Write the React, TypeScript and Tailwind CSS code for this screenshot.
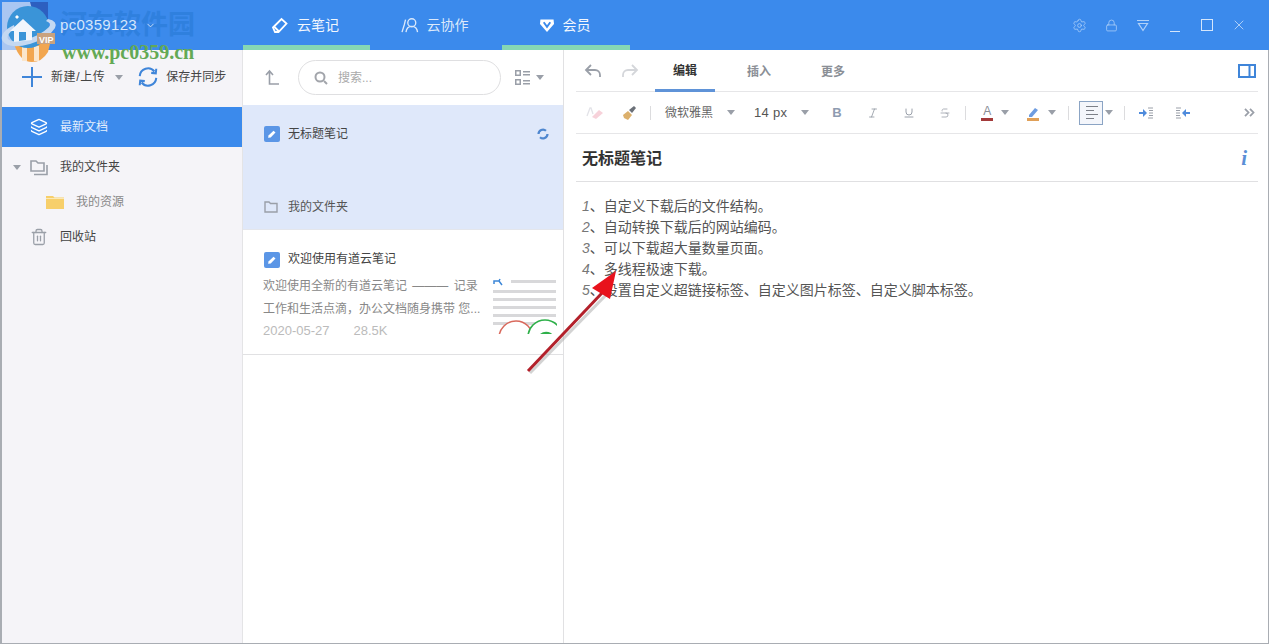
import { ChevronDown, Italic, Layers, Lock, Settings, Strikethrough, Trash2, Underline, X } from 'lucide-react';

const font = { fontFamily: '"Liberation Sans", "Noto Sans CJK SC", sans-serif' };

function Caret({ className = '' }: { className?: string }) {
  return <span className={`w-0 h-0 border-x-[4px] border-x-transparent border-t-[5px] border-t-[#9a9fa8] ${className}`} />;
}

function NoteIcon() {
  return (
    <svg width="16" height="16" viewBox="0 0 16 16" className="shrink-0">
      <rect width="16" height="16" rx="2" fill="#5b96e6" />
      <path d="M4.500 9.500 9.500 4.800l2 1.800-4.800 4.800-2.600.4z" fill="#fff" />
    </svg>
  );
}

function Logo() {
  return (
    <svg width="60" height="64" viewBox="0 0 60 64" className="absolute left-0 top-0">
      <rect x="2" y="2" width="46" height="48" fill="#a9c6f2" />
      <path d="M30 2h18v17L38 30z" fill="#2d5fc0" />
      <path d="M14 44h36l-2 8q-6 10-16 10-12 0-18-18z" fill="#f2a650" />
      <path d="M22 46h5v15h-5zM34 46h5v15h-5z" fill="#fbe6cc" />
      <circle cx="28" cy="27" r="21" fill="#3a94d8" />
      <path d="M2 40q-2-8 12-15l1 4q-9 5-7 10 4 4 16 1 16-4 25-13 3-4-3-6l2-2q10 2 7 9-6 10-25 16Q8 50 2 40z" fill="#c4d8f2" />
      <path d="M10 31 23 19l13 12h-4v9l-18 2V31z" fill="#f2f6fc" />
      <path d="M19 32h7v8l-7 1z" fill="#3a94d8" />
      <path d="m15 17 2-2 2 2-2 2z" fill="#fff" />
      <rect x="37" y="33" width="18" height="11" fill="#c9a27e" />
      <text x="39" y="43" fontSize="9" fontWeight="bold" fill="#fff">VIP</text>
    </svg>
  );
}

function NavTab({ label, icon, active, width }: { label: string; icon: React.ReactNode; active?: boolean; width: string }) {
  return (
    <div className={`${width} h-full flex items-center justify-center gap-[8px] pt-[5px] pr-[3px] text-[14px] border-b-[5px] ${active ? 'border-b-[#85d7b4] text-[#f2f7fe]' : 'border-b-transparent text-[#dbe9fb]'}`}>
      {icon}
      <span>{label}</span>
    </div>
  );
}

function Thumb() {
  return (
    <svg width="64" height="56" viewBox="0 0 64 56" className="shrink-0 overflow-hidden">
      <path d="M1 6V3h5l3 4M6 3l1-2" stroke="#3d87d8" strokeWidth="1.500" fill="none" />
      <rect x="18" y="2" width="45" height="3" fill="#d8d8da" />
      <rect x="0" y="12" width="63" height="3" fill="#d8d8da" />
      <rect x="0" y="20" width="63" height="3" fill="#d8d8da" />
      <rect x="0" y="28" width="63" height="3" fill="#d8d8da" />
      <rect x="0" y="36" width="63" height="3" fill="#d8d8da" />
      <rect x="0" y="44" width="63" height="3" fill="#d8d8da" />
      <circle cx="23" cy="60" r="17" fill="#fff" stroke="#d9695c" strokeWidth="1.500" />
      <circle cx="52" cy="59" r="17" fill="#fff" stroke="#2fb04a" strokeWidth="1.600" />
      <path d="M47 56q5-4 11-1l1 1z" fill="#2fb04a" />
    </svg>
  );
}

export default function App() {
  return (
    <div className="relative w-[1269px] h-[644px] flex flex-col overflow-hidden bg-white text-[#333]" style={font}>
      {/* title bar */}
      <div className="h-[50px] shrink-0 flex items-center bg-[#3b8aec]">
        <div className="relative z-10 w-[243px] h-full flex items-center pl-[60px] gap-[8px] text-[#d5e6fb]">
          <span className="text-[15px] tracking-[0.3px]">pc0359123</span>
          <ChevronDown size={11} strokeWidth={2} className="mt-[1px]" />
        </div>
        <NavTab
          label="云笔记"
          width="w-[127px]"
          active
          icon={
            <svg width="18" height="18" viewBox="0 0 18 18" fill="none" stroke="#fff" strokeWidth="1.800">
              <path d="M2 11.500 10.500 3l5 4.500-8 8.500H4z" />
              <path d="m3 10.500 5 5" />
            </svg>
          }
        />
        <NavTab
          label="云协作"
          width="w-[132px]"
          icon={
            <svg width="18" height="16" viewBox="0 0 20 18" fill="none" stroke="#dbe9fb" strokeWidth="1.500">
              <circle cx="12" cy="6.500" r="4.500" />
              <path d="M5.500 17c.5-4 3-6.500 6.500-6.500s6 2.500 6.500 6.500M5 3 3.500 9 1 17" />
            </svg>
          }
        />
        <NavTab
          label="会员"
          width="w-[128px]"
          active
          icon={
            <svg width="16" height="15" viewBox="0 0 16 16">
              <path d="M1 1.500h14l.5 5L8 15 .5 6.500z" fill="#fff" />
              <path d="m4.500 4.500 3.500 5 3.500-5" fill="none" stroke="#3b8aec" strokeWidth="2" />
            </svg>
          }
        />
        <div className="flex-1" />
        <div className="flex items-center text-[#b0d1f8]">
          <Settings size={15} strokeWidth={1.200} />
          <Lock size={13} strokeWidth={1.400} className="ml-[18px]" />
          <svg width="14" height="13" viewBox="0 0 14 13" fill="none" stroke="currentColor" strokeWidth="1.200" className="ml-[18px]">
            <path d="M1 1.500h12M2.500 4.500h9L7 11.500z" />
          </svg>
          <span className="ml-[20px] w-[10px] h-[1px] mt-[12px] bg-[#d5e6fb]" />
          <span className="ml-[21px] w-[12px] h-[12px] border border-[#d5e6fb]" />
          <X size={16} strokeWidth={1} className="ml-[18px] mr-[22px] text-[#e5f0fd]" />
        </div>
      </div>

      <div className="flex-1 flex min-h-0 border-x-2 border-b border-x-[#a9adb3] border-b-[#a9adb3] border-r-[1px]">
        {/* sidebar */}
        <div className="w-[240px] shrink-0 flex flex-col bg-[#f5f4f8] text-[12px]">
          <div className="h-[57px] flex items-center pl-[20px] pb-[3px] text-[#444]">
            <svg width="20" height="20" viewBox="0 0 20 20" stroke="#3f85d9" strokeWidth="2">
              <path d="M10 0v20M0 10h20" />
            </svg>
            <span className="ml-[9px] tracking-[0.6px]">新建/上传</span>
            <Caret className="ml-[10px] mt-[1px]" />
            <svg width="22" height="22" viewBox="0 0 24 24" fill="none" stroke="#3f85d9" strokeWidth="2.200" className="ml-[14px]">
              <path d="M3 11a9 9 0 0 1 16-5M21 13a9 9 0 0 1-16 5" />
              <path d="m15.500 7.500 5 .5.500-5M8.500 16.500l-5-.500-.500 5" fill="none" />
            </svg>
            <span className="ml-[7px]">保存并同步</span>
          </div>
          <div className="h-[40px] flex items-center pl-[28px] bg-[#3b8aec] text-[#e3eefc]">
            <Layers size={18} strokeWidth={1.700} className="text-white" />
            <span className="ml-[12px]">最新文档</span>
          </div>
          <div className="h-[38px] flex items-center pl-[11px] pt-[2px] text-[#444]">
            <Caret />
            <svg width="18" height="17" viewBox="0 0 18 17" fill="none" stroke="#9a9fa8" strokeWidth="1.600" className="ml-[9px]">
              <path d="M1 12V2h5l2 2h6v8zM17 6v9.500H4" />
            </svg>
            <span className="ml-[12px]">我的文件夹</span>
          </div>
          <div className="h-[32px] flex items-center pl-[44px] pt-[2px] text-[#888]">
            <svg width="18" height="14" viewBox="0 0 18 14">
              <path d="M0 1h7l1.500 1.500H18V14H0z" fill="#f7cf6b" />
              <path d="M0 3h18v1H0z" fill="#fbe9b8" />
            </svg>
            <span className="ml-[12px]">我的资源</span>
          </div>
          <div className="h-[38px] flex items-center pl-[28px] pt-[2px] text-[#444]">
            <Trash2 size={18} strokeWidth={1.700} className="text-[#9a9fa8]" />
            <span className="ml-[12px]">回收站</span>
          </div>
        </div>

        {/* note list */}
        <div className="w-[322px] shrink-0 flex flex-col border-l border-r border-l-[#e4e4e6] border-r-[#e1e1e3]">
          <div className="h-[55px] flex items-center pl-[22px]">
            <svg width="15" height="17" viewBox="0 0 15 17" fill="none" stroke="#9a9fa8" strokeWidth="1.600">
              <path d="M1 6l3.500-4L8 6M4.500 2v13H14" />
            </svg>
            <div className="ml-[18px] w-[203px] h-[35px] flex items-center pl-[15px] rounded-full border border-[#dfdfe1] text-[12px] text-[#aaa]">
              <svg width="14" height="14" viewBox="0 0 14 14" fill="none" stroke="#a2a5ab" strokeWidth="2">
                <circle cx="6" cy="6" r="4.500" />
                <path d="m10 10 3 3" />
              </svg>
              <span className="ml-[10px]">搜索...</span>
            </div>
            <svg width="15" height="15" viewBox="0 0 15 15" fill="#9a9fa8" className="ml-[14px]">
              <path d="M0 0h6v6H0zM1.500 1.500v3h3v-3zM0 9h6v6H0zM1.500 10.500v3h3v-3z" fillRule="evenodd" />
              <path d="M8 1h7v1.500H8zM8 4h7v1.500H8zM8 10h7v1.500H8zM8 13h7v1.500H8z" />
            </svg>
            <Caret className="ml-[6px]" />
          </div>
          <div className="h-[125px] flex flex-col bg-[#dfe8fa] border-b border-b-[#e4e6ec] px-[21px] text-[12px]">
            <div className="h-[57px] flex items-center pt-[1px] text-[#444]">
              <NoteIcon />
              <span className="ml-[8px]">无标题笔记</span>
              <svg width="12" height="12" viewBox="0 0 12 12" fill="none" stroke="#4f87cf" strokeWidth="2.200" className="ml-auto mr-[-7px]">
                <path d="M1.500 6A4.500 4.500 0 0 1 9 2.800M10.500 6A4.500 4.500 0 0 1 3 9.200" />
              </svg>
            </div>
            <div className="flex-1" />
            <div className="h-[48px] flex items-center pt-[4px] text-[#555]">
              <svg width="14" height="12" viewBox="0 0 14 12" fill="none" stroke="#9a9fa8" strokeWidth="1.400">
                <path d="M1 1h4l1.500 1.500H13V11H1z" />
              </svg>
              <span className="ml-[10px]">我的文件夹</span>
            </div>
          </div>
          <div className="h-[125px] flex flex-col border-b border-b-[#e1e1e3] px-[21px] text-[12px]">
            <div className="h-[41px] flex items-end pb-[3px] text-[#444]">
              <NoteIcon />
              <span className="ml-[8px]">欢迎使用有道云笔记</span>
            </div>
            <div className="flex flex-1 mt-[4px] -mx-[1px]">
              <div className="w-[230px] shrink-0 flex flex-col text-[#888] leading-[22.500px]">
                <span className="whitespace-nowrap">欢迎使用全新的有道云笔记<span className="mx-[2px]"> ——— </span>记录</span>
                <span className="whitespace-nowrap">工作和生活点滴，办公文档随身携带 您...</span>
                <div className="flex gap-[24px] text-[13px] text-[#bbb]">
                  <span>2020-05-27</span>
                  <span>28.5K</span>
                </div>
              </div>
              <div className="mt-[3px]">
                <Thumb />
              </div>
            </div>
          </div>
        </div>

        {/* editor */}
        <div className="flex-1 min-w-0 flex flex-col pl-[12px] pr-[10px]">
          <div className="h-[42px] flex items-center border-b border-b-[#e6e6e8] text-[12px] font-bold text-[#8b8f96]">
            <svg width="18" height="14" viewBox="0 0 18 14" fill="none" stroke="#9a9fa8" strokeWidth="1.800" className="ml-[8px]">
              <path d="M7 1 2 6l5 5M2 6h9a5 5 0 0 1 5 5v2" />
            </svg>
            <svg width="18" height="14" viewBox="0 0 18 14" fill="none" stroke="#d4d6da" strokeWidth="1.800" className="ml-[19px]">
              <path d="m11 1 5 5-5 5M16 6H7a5 5 0 0 0-5 5v2" />
            </svg>
            <div className="ml-[16px] w-[60px] h-full flex items-center justify-center pt-[2px] border-b-[3px] border-b-[#5f93d8] -mb-[1px] text-[#333]">
              编辑
            </div>
            <span className="ml-[32px] mt-[2px]">插入</span>
            <span className="ml-[50px] mt-[2px]">更多</span>
            <svg width="18" height="14" viewBox="0 0 18 14" fill="none" stroke="#3f85d9" strokeWidth="2" className="ml-auto mr-[2px]">
              <path d="M1 1h16v12H1zM11.500 1v12" />
            </svg>
          </div>

          <div className="h-[42px] flex items-center border-b border-b-[#e6e6e8] text-[12px] text-[#666]">
            <svg width="18" height="14" viewBox="0 0 18 14" className="ml-[10px]">
              <path d="M1 10 4 2h1l2 6" fill="none" stroke="#e3e3e8" strokeWidth="1.300" />
              <path d="m6 11 7-7 4 3-7 6z" fill="#f7d2da" />
            </svg>
            <svg width="16" height="16" viewBox="0 0 16 16" className="ml-[17px]">
              <path d="M2 10 7 6l4 4-4 5-4-2z" fill="#dcb06c" />
              <path d="m8 5 5-4 2 2-4 5z" fill="#6b7078" />
            </svg>
            <span className="ml-[13px] w-[1px] h-[14px] bg-[#dcdcde]" />
            <span className="ml-[14px]">微软雅黑</span>
            <Caret className="ml-[14px]" />
            <span className="ml-[19px] text-[13px] tracking-[0.3px] text-[#555]">14 px</span>
            <Caret className="ml-[14px]" />
            <span className="ml-[23px] w-[10px] text-[13px] font-bold text-[#8e9bb0]">B</span>
            <Italic size={12} strokeWidth={1.600} className="ml-[25px] text-[#8e95a0]" />
            <Underline size={12} strokeWidth={1.800} className="ml-[24px] text-[#8e95a0]" />
            <Strikethrough size={12} strokeWidth={1.600} className="ml-[24px] text-[#9a9fa8]" />
            <span className="ml-[14px] w-[1px] h-[14px] bg-[#dcdcde]" />
            <span className="ml-[15px] w-[12px] h-[16px] flex flex-col items-center text-[12px] leading-[13px] text-[#8a8e96] border-b-[3px] border-b-[#a33a3a]">A</span>
            <Caret className="ml-[8px]" />
            <svg width="12" height="16" viewBox="0 0 12 16" className="ml-[18px]">
              <path d="M2 10 8 3l3 2-6 7H2z" fill="#6d9ce0" />
              <rect y="13" width="12" height="3" fill="#e0a058" />
            </svg>
            <Caret className="ml-[9px]" />
            <span className="ml-[12px] w-[1px] h-[14px] bg-[#dcdcde]" />
            <span className="ml-[10px] w-[24px] h-[24px] flex flex-col gap-[3px] justify-center pl-[6px] border border-[#8ba4c4] bg-[#f4f6fb]">
              <span className="w-[12px] h-[1px] bg-[#7c8088]" />
              <span className="w-[8px] h-[1px] bg-[#7c8088]" />
              <span className="w-[12px] h-[1px] bg-[#7c8088]" />
              <span className="w-[8px] h-[1px] bg-[#7c8088]" />
            </span>
            <Caret className="ml-[2px]" />
            <span className="ml-[11px] w-[1px] h-[14px] bg-[#dcdcde]" />
            <svg width="14" height="12" viewBox="0 0 14 12" className="ml-[14px]">
              <path d="M0 5h4V2l4 4-4 4V7H0z" fill="#4f8bdc" />
              <path d="M9 1h5M10 3.500h4M10 6h4M10 8.500h4M9 11h5" stroke="#9a9fa8" />
            </svg>
            <svg width="14" height="12" viewBox="0 0 14 12" className="ml-[23px]">
              <path d="M14 5h-4V2L6 6l4 4V7h4z" fill="#4f8bdc" />
              <path d="M0 1h5M0 3.500h4M0 6h4M0 8.500h4M0 11h5" stroke="#9a9fa8" />
            </svg>
            <svg width="11" height="9" viewBox="0 0 11 9" fill="none" stroke="#9a9fa8" strokeWidth="1.800" className="ml-auto mr-[3px]">
              <path d="m1 .8 3.500 3.700L1 8.200M6 .8l3.500 3.700L6 8.200" />
            </svg>
          </div>

          <div className="h-[48px] flex items-center border-b border-b-[#e0e0e2] pt-[3px] pl-[6px] pr-[11px]">
            <span className="text-[16px] font-bold text-[#333]">无标题笔记</span>
            <span className="ml-auto text-[21px] italic font-bold text-[#5b8fd6]" style={{ fontFamily: '"Liberation Serif", serif' }}>i</span>
          </div>

          <div className="pt-[14px] pl-[6px] text-[14px] leading-[21px] text-[#555]">
            <p><i className="text-[#777]">1</i>、自定义下载后的文件结构。</p>
            <p><i className="text-[#777]">2</i>、自动转换下载后的网站编码。</p>
            <p><i className="text-[#777]">3</i>、可以下载超大量数量页面。</p>
            <p><i className="text-[#777]">4</i>、多线程极速下载。</p>
            <p><i className="text-[#777]">5</i>、设置自定义超链接标签、自定义图片标签、自定义脚本标签。</p>
          </div>
        </div>
      </div>

      {/* watermark and annotation arrow over the shot */}
      <Logo />
      <span className="absolute left-[60px] top-[5px] text-[27px] leading-[36px] font-bold text-[#2f80de] whitespace-nowrap" style={{ fontFamily: '"Noto Sans CJK SC", serif' }}>河东软件园</span>
      <span className="absolute left-[62px] top-[41px] text-[20px] leading-[22px] font-bold text-[#63a955] whitespace-nowrap" style={{ fontFamily: '"Liberation Serif", serif' }}>www.pc0359.cn</span>
      <svg width="120" height="120" viewBox="0 0 120 120" className="absolute left-[520px] top-[260px]">
        <path d="M10 113 86 35" stroke="#a8a8a8" strokeWidth="3" opacity="0.5" />
        <path d="M8 111 82 33" stroke="#b3202a" strokeWidth="3" />
        <path d="M96 11 90 39 72 28z" fill="#e8121c" />
      </svg>
    </div>
  );
}
